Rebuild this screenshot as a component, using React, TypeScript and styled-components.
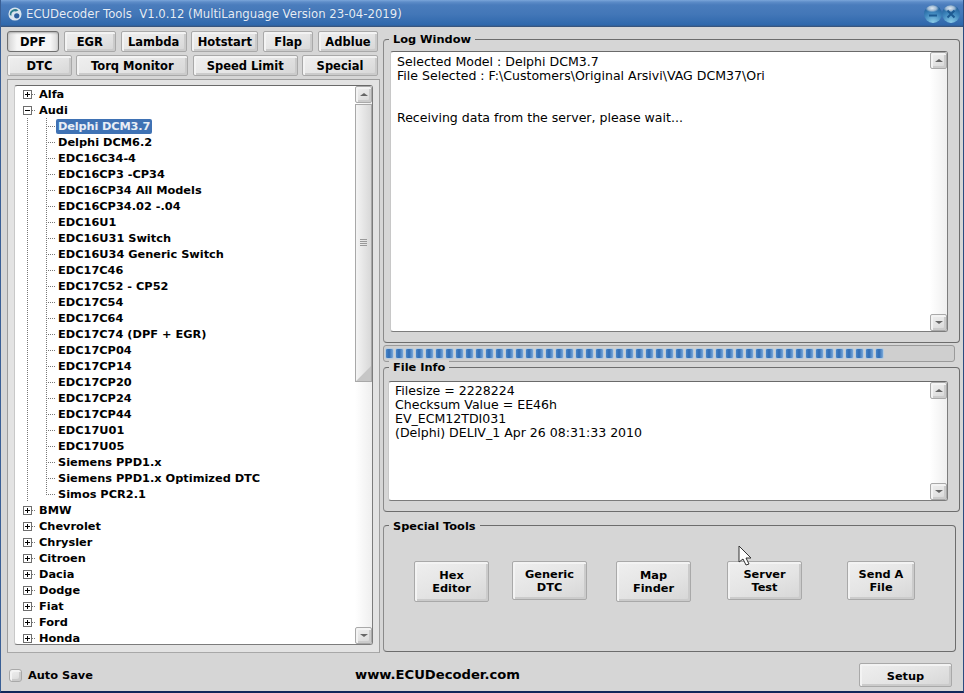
import React from 'react';
import styled, { createGlobalStyle, css } from 'styled-components';

const GlobalStyle = createGlobalStyle`
  html, body { margin: 0; padding: 0; background: #0d1f4a; }
  * { box-sizing: border-box; }
`;

const FONT = `"DejaVu Sans", Verdana, sans-serif`;

const Window = styled.div`
  position: relative;
  width: 964px;
  height: 693px;
  overflow: hidden;
  background: #d6d6d6;
  border-left: 1px solid #3a5f95;
  border-right: 1px solid #2c4c80;
  border-bottom: 2px solid #12275a;
  font-family: ${FONT};
  color: #000;
`;

const TitleBar = styled.div`
  height: 27px;
  display: flex;
  align-items: center;
  padding: 0 3px 0 7px;
  background: linear-gradient(#7ba6da 0, #5d8cc8 2px, #4a7cbc 5px, #4377b8 14px, #2f68ac 25px, #3a4f70 27px);
  color: #e6edf6;
  font-size: 11.7px;
  white-space: pre;
`;

const TitleText = styled.span`
  margin-left: 4px;
  flex: 1;
  text-shadow: 0 0 1px #2a5da0;
`;

const Orb = styled.div`
  width: 18px;
  height: 18px;
  border-radius: 50%;
  display: flex;
  align-items: center;
  justify-content: center;
  background:
    radial-gradient(ellipse 7px 4px at 45% 18%, #dfe9f2 0, #9db8d2 60%, transparent 100%),
    radial-gradient(circle at 50% 100%, #8fd0ea 0, #3f87bd 50%, #1f5c98 85%, #5f8cb8 100%);
`;

const Body = styled.div`
  display: flex;
  padding: 4px 3px 0 6px;
  gap: 4px;
`;

const LeftColumn = styled.div`
  width: 372px;
  display: flex;
  flex-direction: column;
`;

const RightColumn = styled.div`
  width: 577px;
  display: flex;
  flex-direction: column;
`;

const TabRow = styled.div<{ $bottom: number }>`
  display: flex;
  justify-content: space-between;
  margin-bottom: ${(p) => p.$bottom}px;
  padding-right: 1px;
`;

const bevel = css`
  border: 1px solid #a9a9a9;
  border-radius: 2px;
  background: linear-gradient(160deg, #efefef, #e4e4e4 55%, #d6d6d6);
  box-shadow: inset 2px 2px 0 #f3f3f3, inset -2px -2px 0 #cbcbcb;
`;

const Tab = styled.div<{ $w: number; $active?: boolean }>`
  ${bevel}
  width: ${(p) => p.$w}px;
  height: 21px;
  padding-top: 1px;
  display: flex;
  align-items: center;
  justify-content: center;
  font-size: 11.5px;
  font-weight: 700;
  ${(p) =>
    p.$active &&
    css`
      border: 1px solid #6f6f6f;
      border-radius: 3px;
      background: linear-gradient(90deg, #d4d4d4, #f6f6f6 18%, #f6f6f6 85%, #d8d8d8);
      box-shadow: inset 0 1px 2px #aaa;
    `}
`;

const TreePanel = styled.div`
  width: 373px;
  height: 574px;
  margin-top: 3px;
  padding: 5px 6px 7px 6px;
  border: 1px solid #9e9e9e;
  border-bottom-color: #a8a8a8;
  background: #e3e3e3;
`;

const WhiteBox = styled.div<{ $h: number }>`
  display: flex;
  height: ${(p) => p.$h}px;
  background: #fff;
  border: 1px solid #7c7c7c;
  border-left-color: #c8c8c8;
  border-top-color: #6a6a6a;
  border-radius: 3px;
  overflow: hidden;
`;

const TreeList = styled.div`
  flex: 1;
  overflow: hidden;
`;

const dots = 'repeating-linear-gradient(#777 0 1px, transparent 1px 2px)';

const TreeRow = styled.div<{ $child?: boolean; $lastChild?: boolean }>`
  height: 16px;
  display: flex;
  align-items: center;
  padding-left: ${(p) => (p.$child ? 31 : 8)}px;
  font-size: 11.35px;
  font-weight: 700;
  white-space: nowrap;
  background-repeat: no-repeat;
  ${(p) =>
    p.$child &&
    css`
      background-image: ${dots}, ${dots};
      background-size: 1px 16px, 1px ${p.$lastChild ? 8 : 16}px;
      background-position: 12px 0, 31px 0;
    `}
`;

const Connector = styled.span<{ $w: number }>`
  width: ${(p) => p.$w}px;
  height: 1px;
  flex: none;
  background: repeating-linear-gradient(90deg, #777 0 1px, transparent 1px 2px);
`;

const Toggle = styled.span`
  position: relative;
  width: 9px;
  height: 9px;
  flex: none;
  border: 1px solid #6e6e6e;
  background: #fff;
`;

const ToggleH = styled.span`
  position: absolute;
  left: 1px;
  top: 3px;
  width: 5px;
  height: 1px;
  background: #000;
`;

const ToggleV = styled.span`
  position: absolute;
  left: 3px;
  top: 1px;
  width: 1px;
  height: 5px;
  background: #000;
`;

const RowLabel = styled.span<{ $selected?: boolean; $child?: boolean }>`
  margin-left: ${(p) => (p.$child ? 0 : 1)}px;
  padding: 1px 2px;
  line-height: 13px;
  border-radius: 2px;
  ${(p) =>
    p.$selected &&
    css`
      background: #3f72b4;
      color: #e8eef6;
      letter-spacing: -0.15px;
    `}
`;

const ScrollBar = styled.div`
  width: 17px;
  flex: none;
  display: flex;
  flex-direction: column;
  background: linear-gradient(90deg, #fff, #efefef);
`;

const ArrowBtn = styled.div`
  ${bevel}
  width: 17px;
  height: 17px;
  flex: none;
  display: flex;
  align-items: center;
  justify-content: center;
`;

const Arrow = styled.span<{ $up?: boolean }>`
  width: 0;
  height: 0;
  border-left: 4px solid transparent;
  border-right: 4px solid transparent;
  ${(p) => (p.$up ? 'border-bottom: 3px solid #666;' : 'border-top: 3px solid #666;')}
`;

const Thumb = styled.div`
  width: 17px;
  height: 278px;
  flex: none;
  margin-top: 1px;
  display: flex;
  align-items: center;
  justify-content: center;
  border: 1px solid #a8a8a8;
  background:
    linear-gradient(315deg, #c6c6c6 0, #c6c6c6 10px, transparent 11px),
    linear-gradient(90deg, #f4f4f4, #d8d8d8);
`;

const Grip = styled.span`
  width: 7px;
  height: 8px;
  background: repeating-linear-gradient(#999 0 1px, transparent 1px 2px);
`;

const TrackFill = styled.div`
  flex: 1;
`;

const Group = styled.div<{ $h: number; $mt: number; $pl: number; $pt: number; $w?: number }>`
  position: relative;
  width: ${(p) => p.$w ?? 577}px;
  height: ${(p) => p.$h}px;
  margin-top: ${(p) => p.$mt}px;
  padding: ${(p) => p.$pt}px 11px 0 ${(p) => p.$pl}px;
  border: 1px solid #6d6d6d;
  border-left-color: #8a8a8a;
  border-radius: 4px;
`;

const Legend = styled.span<{ $top: number }>`
  position: absolute;
  left: 5px;
  top: ${(p) => p.$top}px;
  padding: 0 4px;
  background: #d6d6d6;
  font-size: 11.35px;
  font-weight: 700;
  line-height: 14px;
`;

const LogText = styled.div<{ $pt: number }>`
  flex: 1;
  padding: ${(p) => p.$pt}px 6px 0;
  font-size: 12.55px;
  line-height: 14px;
  white-space: pre;
  overflow: hidden;
`;

const Progress = styled.div`
  width: 572px;
  height: 17px;
  margin-top: 2px;
  display: flex;
  gap: 1px;
  padding: 2px 1px;
  border: 1px solid #9a9a9a;
  border-radius: 3px;
  background: #cfcfcf;
`;

const Block = styled.span`
  width: 9px;
  height: 100%;
  border-radius: 2px;
  border: 1px solid #b4cbe0;
  background: linear-gradient(90deg, #4a86c8, #2f6cb4 45%, #7aa8d8);
`;

const ToolRow = styled.div`
  display: flex;
  align-items: flex-start;
`;

const ToolBtn = styled.div<{ $w: number; $h: number; $ml: number }>`
  ${bevel}
  width: ${(p) => p.$w}px;
  height: ${(p) => p.$h}px;
  margin-left: ${(p) => p.$ml}px;
  flex: none;
  display: flex;
  align-items: center;
  justify-content: center;
  text-align: center;
  font-size: 11.35px;
  font-weight: 700;
  line-height: 13px;
`;

const Footer = styled.div`
  height: 38px;
  display: flex;
  align-items: center;
  padding: 0 0 0 8px;
  margin-top: 3px;
`;

const CheckBox = styled.span`
  ${bevel}
  width: 13px;
  height: 13px;
  border-radius: 3px;
`;

const AutoSave = styled.span`
  margin-left: 6px;
  width: 327px;
  font-size: 11.35px;
  font-weight: 700;
`;

const Site = styled.span`
  width: 504px;
  margin-bottom: 2px;
  font-size: 13.15px;
  font-weight: 700;
`;

const SetupBtn = styled.div`
  ${bevel}
  width: 93px;
  height: 24px;
  padding-top: 1px;
  display: flex;
  align-items: center;
  justify-content: center;
  font-size: 11.35px;
  font-weight: 700;
`;

const Cursor = styled.svg`
  position: absolute;
  left: 737px;
  top: 545px;
`;

const tabsTop: [string, number, boolean?][] = [
  ['DPF', 52, true], ['EGR', 52], ['Lambda', 66], ['Hotstart', 67], ['Flap', 50], ['Adblue', 60],
];
const tabsBottom: [string, number][] = [
  ['DTC', 65], ['Torq Monitor', 112], ['Speed Limit', 105], ['Special', 76],
];

const audiModels = [
  'Delphi DCM3.7', 'Delphi DCM6.2', 'EDC16C34-4', 'EDC16CP3 -CP34', 'EDC16CP34 All Models', 'EDC16CP34.02 -.04',
  'EDC16U1', 'EDC16U31 Switch', 'EDC16U34 Generic Switch', 'EDC17C46', 'EDC17C52 - CP52', 'EDC17C54', 'EDC17C64',
  'EDC17C74 (DPF + EGR)', 'EDC17CP04', 'EDC17CP14', 'EDC17CP20', 'EDC17CP24', 'EDC17CP44', 'EDC17U01', 'EDC17U05',
  'Siemens PPD1.x', 'Siemens PPD1.x Optimized DTC', 'Simos PCR2.1',
];
const brandsAfter = ['BMW', 'Chevrolet', 'Chrysler', 'Citroen', 'Dacia', 'Dodge', 'Fiat', 'Ford', 'Honda'];

const tools = [
  { label: ['Hex', 'Editor'], w: 75, h: 41, ml: 30 },
  { label: ['Generic', 'DTC'], w: 75, h: 39, ml: 23 },
  { label: ['Map', 'Finder'], w: 75, h: 41, ml: 29 },
  { label: ['Server', 'Test'], w: 75, h: 39, ml: 36 },
  { label: ['Send A', 'File'], w: 68, h: 39, ml: 45 },
];

function Brand({ name, open }: { name: string; open?: boolean }) {
  return (
    <TreeRow>
      <Toggle>
        <ToggleH />
        {!open && <ToggleV />}
      </Toggle>
      <Connector $w={4} />
      <RowLabel>{name}</RowLabel>
    </TreeRow>
  );
}

function SideScroll({ thumb }: { thumb?: boolean }) {
  return (
    <ScrollBar>
      <ArrowBtn><Arrow $up /></ArrowBtn>
      {thumb && <Thumb><Grip /></Thumb>}
      <TrackFill />
      <ArrowBtn><Arrow /></ArrowBtn>
    </ScrollBar>
  );
}

export default function App() {
  return (
    <Window>
      <GlobalStyle />
      <TitleBar>
        <svg width="14" height="14" viewBox="0 0 16 16">
          <circle cx="8" cy="8" r="7.5" fill="#d8e4ee" />
          <path d="M2 9a6 6 0 0 1 10-5l-3 1a4 4 0 0 0-5 5z" fill="#2d7f8f" />
          <circle cx="10" cy="10" r="3" fill="#2b5f9e" />
        </svg>
        <TitleText>{'ECUDecoder Tools  V1.0.12 (MultiLanguage Version 23-04-2019)'}</TitleText>
        <Orb>
          <svg width="12" height="12" viewBox="0 0 12 12">
            <path d="M2 7.5h8" stroke="#1d5a92" strokeWidth="2" />
          </svg>
        </Orb>
        <Orb>
          <svg width="12" height="12" viewBox="0 0 12 12">
            <path d="M2.5 2.5l7 7M9.5 2.5l-7 7" stroke="#1d5a92" strokeWidth="2" />
          </svg>
        </Orb>
      </TitleBar>

      <Body>
        <LeftColumn>
          <TabRow $bottom={3}>
            {tabsTop.map(([t, w, a]) => <Tab key={t} $w={w} $active={a}>{t}</Tab>)}
          </TabRow>
          <TabRow $bottom={0}>
            {tabsBottom.map(([t, w]) => <Tab key={t} $w={w}>{t}</Tab>)}
          </TabRow>
          <TreePanel>
            <WhiteBox $h={560}>
              <TreeList>
                <Brand name="Alfa" />
                <Brand name="Audi" open />
                {audiModels.map((m, i) => (
                  <TreeRow key={m} $child $lastChild={i === audiModels.length - 1}>
                    <Connector $w={10} />
                    <RowLabel $child $selected={i === 0}>{m}</RowLabel>
                  </TreeRow>
                ))}
                {brandsAfter.map((b) => <Brand key={b} name={b} />)}
              </TreeList>
              <SideScroll thumb />
            </WhiteBox>
          </TreePanel>
        </LeftColumn>

        <RightColumn>
          <Group $h={304} $mt={8} $pl={6} $pt={11}>
            <Legend $top={-8}>Log Window</Legend>
            <WhiteBox $h={281}>
              <LogText $pt={3}>{'Selected Model : Delphi DCM3.7\nFile Selected : F:\\Customers\\Original Arsivi\\VAG DCM37\\Ori\n\n\nReceiving data from the server, please wait...'}</LogText>
              <SideScroll />
            </WhiteBox>
          </Group>
          <Progress>
            {Array.from({ length: 50 }, (_, i) => <Block key={i} />)}
          </Progress>
          <Group $h={145} $mt={5} $pl={4} $pt={13}>
            <Legend $top={-8}>File Info</Legend>
            <WhiteBox $h={120}>
              <LogText $pt={2}>{'Filesize = 2228224\nChecksum Value = EE46h\nEV_ECM12TDI031\n(Delphi) DELIV_1 Apr 26 08:31:33 2010'}</LogText>
              <SideScroll />
            </WhiteBox>
          </Group>
          <Group $h={127} $mt={13} $pl={0} $pt={35} $w={573}>
            <Legend $top={-7}>Special Tools</Legend>
            <ToolRow>
              {tools.map((t) => (
                <ToolBtn key={t.label[0]} $w={t.w} $h={t.h} $ml={t.ml}>
                  {t.label[0]}<br />{t.label[1]}
                </ToolBtn>
              ))}
            </ToolRow>
          </Group>
        </RightColumn>
      </Body>

      <Footer>
        <CheckBox />
        <AutoSave>Auto Save</AutoSave>
        <Site>www.ECUDecoder.com</Site>
        <SetupBtn>Setup</SetupBtn>
      </Footer>

      <Cursor width="14" height="22" viewBox="0 0 14 22">
        <path d="M1 1v16l4-3 3 6 3-1-3-6h5z" fill="#fff" stroke="#333" strokeWidth="1" />
      </Cursor>
    </Window>
  );
}
